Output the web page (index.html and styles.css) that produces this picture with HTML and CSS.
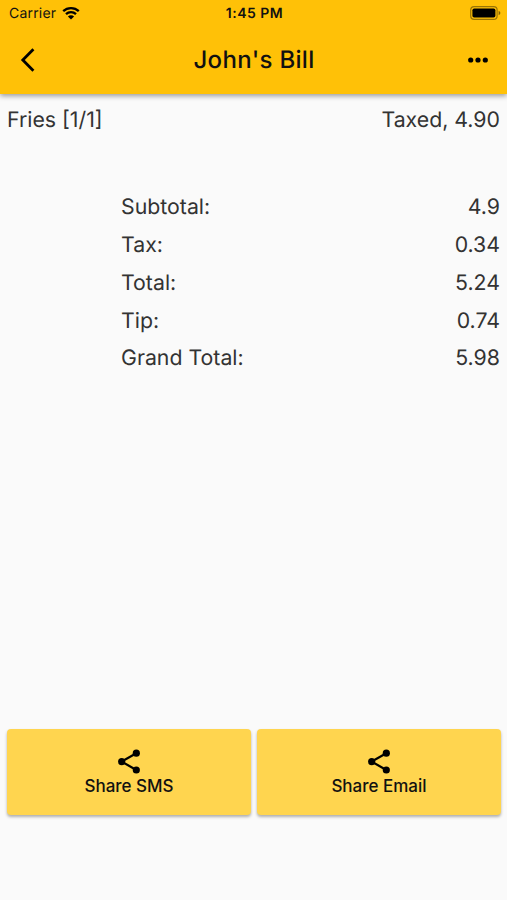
FILE: index.html
```html
<!DOCTYPE html>
<html lang="en">
<head>
  <meta charset="UTF-8" />
  <title>John's Bill</title>
  <link rel="stylesheet" href="styles.css">
</head>
<body>
  <header>
    <div class="status-bar">
      <div class="carrier">
        <span>Carrier</span>
        <svg class="wifi" viewBox="0 0 18 14">
          <path d="M1.2 5.2a11.2 11.2 0 0 1 15.6 0M4 8.2a7.2 7.2 0 0 1 10 0" fill="none" stroke="#000" stroke-width="2.3"/>
          <path d="M9 13.6 5.9 10.5a4.4 4.4 0 0 1 6.2 0z"/>
        </svg>
      </div>
      <div class="time">1:45 PM</div>
      <div class="battery">
        <svg viewBox="0 0 31 14">
          <rect x=".7" y=".7" width="26.4" height="12.6" rx="3.4" fill="none" stroke="#000" stroke-opacity=".4" stroke-width="1.2"/>
          <rect x="2.4" y="2.4" width="23" height="9.2" rx="1.8"/>
          <path d="M28.6 4.8q1.8.7 1.8 2.2t-1.8 2.2z" fill-opacity=".5"/>
        </svg>
      </div>
    </div>
    <div class="app-bar">
      <svg class="back" viewBox="0 0 16 24">
        <path d="M13.4 1.2 2.8 12l10.6 10.8" fill="none" stroke="#000" stroke-width="2.8"/>
      </svg>
      <h1>John's Bill</h1>
      <svg class="more" viewBox="0 0 20 6">
        <circle cx="2.7" cy="3" r="2.6"/>
        <circle cx="10" cy="3" r="2.6"/>
        <circle cx="17.3" cy="3" r="2.6"/>
      </svg>
    </div>
  </header>

  <main>
    <div class="item">
      <span>Fries [1/1]</span>
      <span>Taxed, 4.90</span>
    </div>

    <div class="totals">
      <div class="row"><span>Subtotal:</span><span>4.9</span></div>
      <div class="row"><span>Tax:</span><span>0.34</span></div>
      <div class="row"><span>Total:</span><span>5.24</span></div>
      <div class="row"><span>Tip:</span><span>0.74</span></div>
      <div class="row"><span>Grand Total:</span><span>5.98</span></div>
    </div>
  </main>

  <div class="actions">
    <button>
      <svg class="share" viewBox="0 0 22 26">
        <path d="M18.3 4.2 3.7 12.6 18.3 21" fill="none" stroke="#000" stroke-width="2.2"/>
        <circle cx="18.3" cy="4.2" r="3.6"/>
        <circle cx="3.7" cy="12.6" r="3.6"/>
        <circle cx="18.3" cy="21" r="3.6"/>
      </svg>
      <span>Share SMS</span>
    </button>
    <button>
      <svg class="share" viewBox="0 0 22 26">
        <path d="M18.3 4.2 3.7 12.6 18.3 21" fill="none" stroke="#000" stroke-width="2.2"/>
        <circle cx="18.3" cy="4.2" r="3.6"/>
        <circle cx="3.7" cy="12.6" r="3.6"/>
        <circle cx="18.3" cy="21" r="3.6"/>
      </svg>
      <span>Share Email</span>
    </button>
  </div>
</body>
</html>
```
FILE: styles.css
```css
* {
  box-sizing: border-box;
}
body {
  margin: 0;
  height: 900px;
  display: flex;
  flex-direction: column;
  overflow: hidden;
  font-family: Inter, Roboto, sans-serif;
  text-rendering: geometricPrecision;
  background: #fafafa;
  color: #333;
}
header {
  height: 94px;
  background: #ffc107;
  color: #111;
  box-shadow: 0 2px 5px rgba(0,0,0,0.38);
}
.status-bar {
  display: grid;
  grid-template-columns: 1fr auto 1fr;
  align-items: center;
  height: 27px;
  padding: 0 7px 0 9px;
}
.carrier {
  display: flex;
  align-items: center;
  gap: 6px;
  font-size: 14px;
  letter-spacing: 0.2px;
}
.wifi {
  width: 18px;
  height: 14px;
  margin-bottom: 2px;
}
.time {
  font-size: 14px;
  font-weight: 600;
  letter-spacing: 0.5px;
}
.battery {
  display: flex;
  justify-content: flex-end;
}
.battery svg {
  width: 31px;
  height: 14px;
  margin: 0 -1px 1px 0;
}
.app-bar {
  display: grid;
  grid-template-columns: 1fr auto 1fr;
  align-items: center;
  height: 65px;
  padding: 0 19px 0 20px;
}
.back {
  width: 16px;
  height: 24px;
}
h1 {
  margin: 0;
  font-size: 24px;
  font-weight: 500;
  letter-spacing: 0.3px;
}
.more {
  width: 20px;
  height: 6px;
  justify-self: end;
}
main {
  flex: 1;
  padding: 7px 7px 0;
  font-size: 21.3px;
}
.item, .row {
  display: flex;
  justify-content: space-between;
  align-items: center;
  height: 37.9px;
}
.totals {
  margin: 49px 0 0 114px;
}
.actions {
  display: grid;
  grid-template-columns: 1fr 1fr;
  gap: 6px;
  padding: 0 6px 0 7px;
  margin-bottom: 85px;
}
button {
  display: flex;
  flex-direction: column;
  align-items: center;
  height: 86px;
  padding: 20px 0 0;
  border: none;
  border-radius: 4px;
  background: #ffd54f;
  color: #111;
  font-family: inherit;
  font-size: 17px;
  font-weight: 500;
  line-height: 22px;
  box-shadow: 0 2px 3px rgba(0,0,0,0.3);
}
.share {
  width: 22px;
  height: 26px;
}
```
